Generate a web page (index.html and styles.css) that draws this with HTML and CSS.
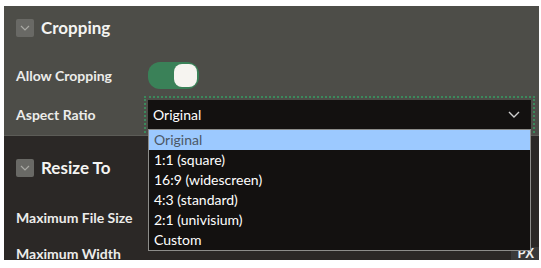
FILE: index.html
```html
<!DOCTYPE html>
<html lang="en">
<head>
    <meta charset="UTF-8">
    <title>Image Settings</title>
    <link rel="stylesheet" href="styles.css">
</head>
<body>
    <div class="panel">
        <!-- Cropping -->
        <section class="region region-crop">
            <div class="region-header">
                <span class="collapse-btn">
                    <svg width="10" height="6" viewBox="0 0 10 6"><path d="M1 1 L5 5 L9 1" fill="none" stroke="#a9a9a4" stroke-width="1.2"/></svg>
                </span>
                <h2>Cropping</h2>
            </div>
            <div class="field field-toggle">
                <label>Allow Cropping</label>
                <span class="switch"><span class="knob"></span></span>
            </div>
            <div class="field field-select">
                <label>Aspect Ratio</label>
                <div class="select-wrap">
                    <div class="select">
                        <span>Original</span>
                        <svg width="12" height="7" viewBox="0 0 12 7"><path d="M1 1 L6 6 L11 1" fill="none" stroke="#cfcfcf" stroke-width="1.4"/></svg>
                    </div>
                    <ul class="options">
                        <li class="selected">Original</li>
                        <li>1:1 (square)</li>
                        <li>16:9 (widescreen)</li>
                        <li>4:3 (standard)</li>
                        <li>2:1 (univisium)</li>
                        <li>Custom</li>
                    </ul>
                </div>
            </div>
        </section>
        <!-- Resize To -->
        <section class="region region-resize">
            <div class="region-header">
                <span class="collapse-btn">
                    <svg width="10" height="6" viewBox="0 0 10 6"><path d="M1 1 L5 5 L9 1" fill="none" stroke="#a9a9a4" stroke-width="1.2"/></svg>
                </span>
                <h2>Resize To</h2>
            </div>
            <div class="field field-plain">
                <label>Maximum File Size</label>
            </div>
            <div class="field field-plain field-last">
                <label>Maximum Width</label>
                <span class="unit">PX</span>
            </div>
        </section>
    </div>
</body>
</html>
```

FILE: styles.css
```css
body {
    margin: 0;
    background: #ffffff;
    font-family: Lato, "Open Sans", sans-serif;
}
.panel {
    margin: 6px 0 0 4px;
    width: 535px;
    height: 254px;
    overflow: hidden;
}
.region {
    padding-left: 12px;
}
.region-crop {
    background: #4d4d48;
    height: 130px;
    box-sizing: border-box;
    padding-top: 13px;
    border-bottom: 1px solid #5c5c57;
}
.region-resize {
    background: #2b2826;
    height: 124px;
    box-sizing: border-box;
    padding-top: 23px;
    position: relative;
}
.region-header {
    display: flex;
    align-items: center;
    gap: 7px;
}
.collapse-btn {
    width: 18px;
    height: 18px;
    background: #696965;
    border-radius: 2px;
    display: flex;
    align-items: center;
    justify-content: center;
}
h2 {
    margin: 0;
    font-size: 17px;
    font-weight: 700;
    color: #f4f4f2;
    line-height: 18px;
}
.field {
    display: flex;
    align-items: center;
}
.field label {
    width: 132px;
    font-size: 14px;
    font-weight: 700;
    color: #ececea;
}
.field-toggle {
    margin-top: 25px;
}
.switch {
    width: 51px;
    height: 27px;
    box-sizing: border-box;
    background: #3a8158;
    border-radius: 12px;
    display: flex;
    align-items: center;
    justify-content: flex-end;
    padding-right: 2px;
}
.knob {
    width: 23px;
    height: 23px;
    background: #f6f4f0;
    border-radius: 8px;
}
.field-select {
    margin-top: 11px;
}
.select-wrap {
    position: relative;
    width: 383px;
}
.select {
    height: 29px;
    background: #131110;
    outline: 2px dotted #3b8a5c;
    outline-offset: 2px;
    display: flex;
    align-items: center;
    justify-content: space-between;
    padding: 0 11px 0 5px;
    color: #ffffff;
    font-size: 14px;
}
.options {
    position: absolute;
    top: 29px;
    left: 0;
    right: 0;
    margin: 0;
    padding: 0;
    list-style: none;
    background: #131110;
    border: 1px solid #8d8d8a;
    z-index: 2;
}
.options li {
    height: 20px;
    line-height: 20px;
    padding-left: 5px;
    font-size: 14px;
    color: #ffffff;
}
.options li.selected {
    background: #9cc9ff;
    color: #4c5866;
}
.field-plain {
    margin-top: 32px;
}
.field-last {
    margin-top: 19px;
}
.unit {
    position: absolute;
    right: 0;
    bottom: 0;
    background: #3a3a3a;
    color: #f0f0f0;
    font-size: 13px;
    font-weight: 700;
    padding: 0 5px 0 6px;
    height: 13px;
    line-height: 13px;
}
```
